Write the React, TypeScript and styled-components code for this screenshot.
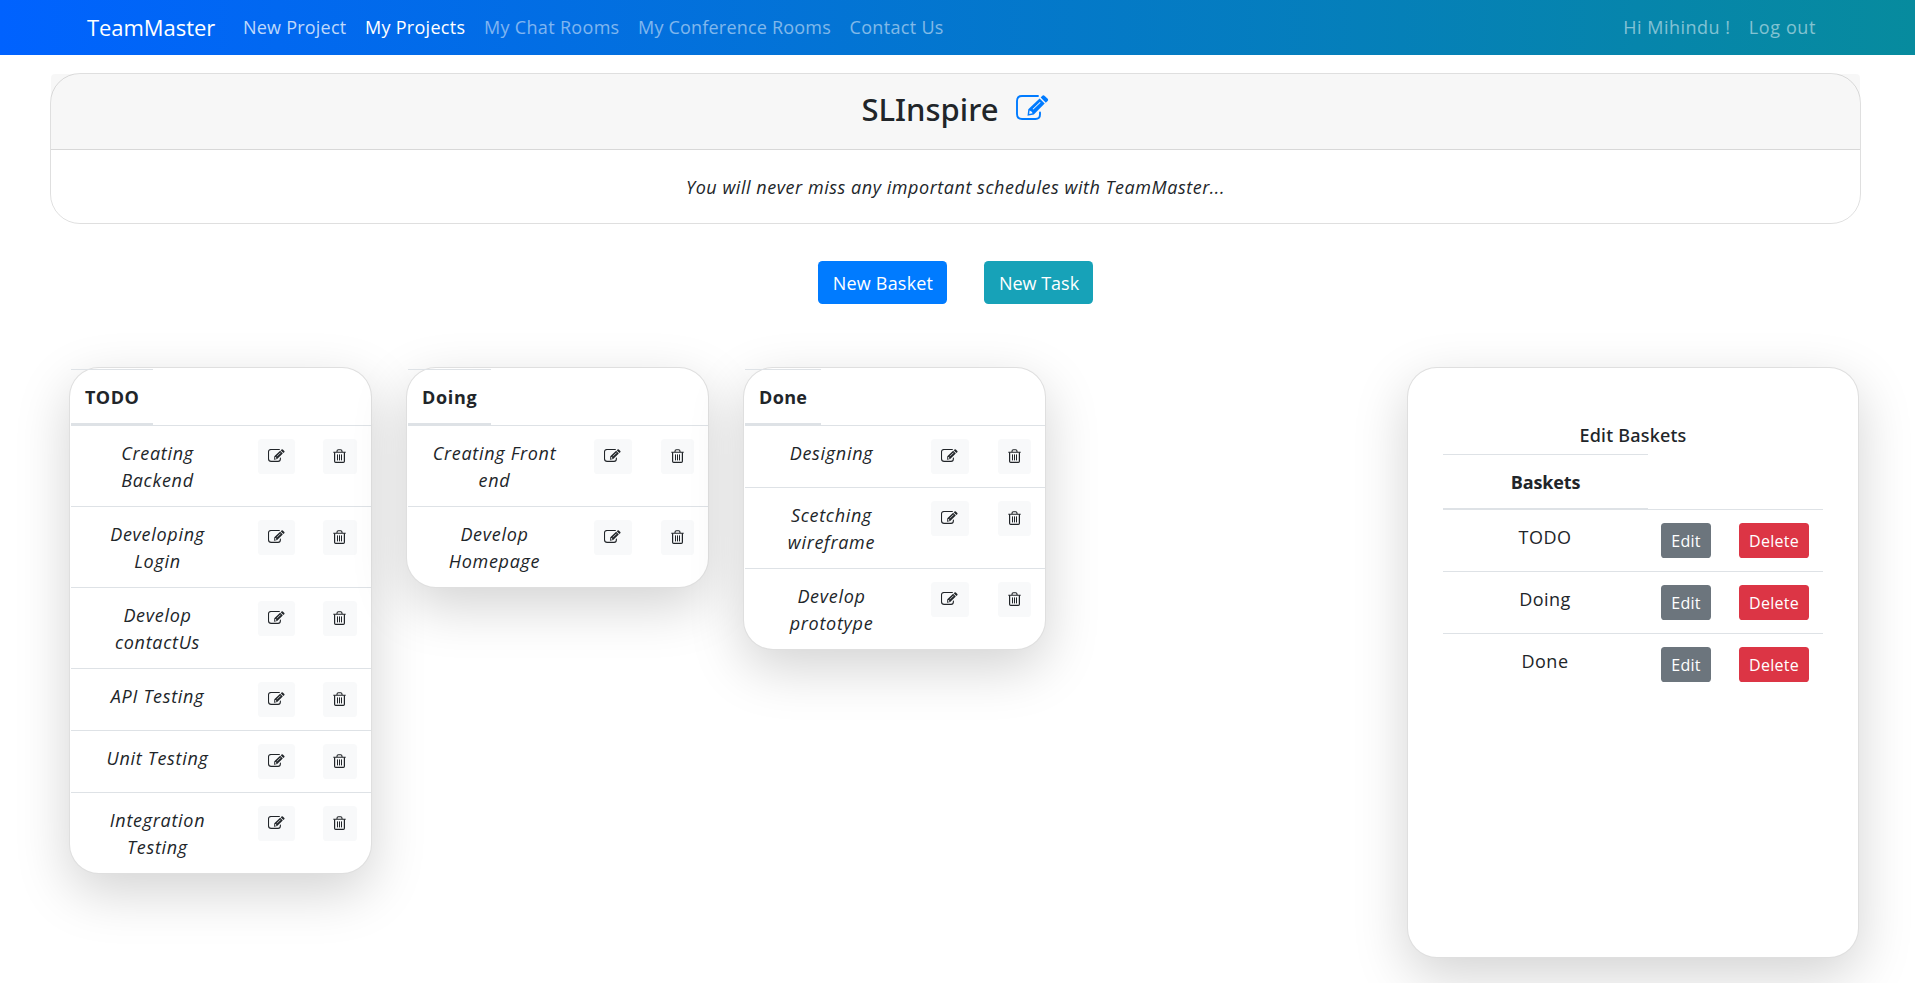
import React from "react";
import styled, { createGlobalStyle, css } from "styled-components";

const GlobalStyle = createGlobalStyle`
  *, *::before, *::after { box-sizing: border-box; }
  html, body { margin: 0; height: 100%; overflow: hidden; background: #fff; }
  body {
    font-family: "Open Sans", "Noto Sans", sans-serif;
    font-size: 18px;
    line-height: 27px;
    color: #212529;
  }
`;

const Page = styled.div`
  height: 983px;
  overflow: hidden;
`;

const Navbar = styled.nav`
  display: flex;
  align-items: center;
  height: 55px;
  padding: 0 99px 0 87px;
  background: linear-gradient(to right, #0062ff, #078b9e);
`;

const Brand = styled.a`
  width: 156px;
  font-size: 22px;
  letter-spacing: -0.05px;
  color: #fff;
  white-space: nowrap;
`;

type Tone = "bright" | "active" | "muted";
const tones: Record<Tone, string> = {
  bright: "rgba(255, 255, 255, 0.75)",
  active: "#fff",
  muted: "rgba(255, 255, 255, 0.5)",
};

const NavLink = styled.a<{ $tone: Tone; $width?: number; $tracking: number }>`
  width: ${(p) => (p.$width ? `${p.$width}px` : "auto")};
  letter-spacing: ${(p) => p.$tracking}px;
  color: ${(p) => tones[p.$tone]};
  white-space: nowrap;
`;

const NavEnd = styled.div`
  display: flex;
  margin-left: auto;
`;

const Banner = styled.section`
  margin: 18px 54px 0 50px;
  height: 151px;
  border: 1px solid rgba(0, 0, 0, 0.125);
  border-radius: 30px;
  text-align: center;
`;

const BannerHead = styled.header`
  display: flex;
  justify-content: center;
  height: 76px;
  padding: 15px 0 0;
  background: rgba(0, 0, 0, 0.03);
  border-bottom: 1px solid rgba(0, 0, 0, 0.125);
  border-radius: 4px 4px 0 0;
`;

const Title = styled.h1`
  margin: 0 18px 0 0;
  font-family: "Noto Sans", sans-serif;
  font-size: 31px;
  font-weight: 500;
  line-height: 40px;
  letter-spacing: 0;
`;

const TitleEdit = styled.a`
  display: flex;
  padding-top: 6px;
  color: #007bff;
`;

const Tagline = styled.p`
  margin: 0;
  padding-top: 24px;
  font-style: italic;
  letter-spacing: 0.54px;
`;

const Actions = styled.div`
  display: flex;
  justify-content: center;
  gap: 37px;
  margin-top: 37px;
  padding-right: 4px;
`;

const ActionButton = styled.button<{ $color: string; $width: number; $tracking: number }>`
  width: ${(p) => p.$width}px;
  height: 43px;
  padding: 2px 0 0 1px;
  border: 0;
  border-radius: 4.5px;
  background: ${(p) => p.$color};
  color: #fff;
  font: inherit;
  letter-spacing: ${(p) => p.$tracking}px;
`;

const Board = styled.main`
  display: flex;
  align-items: flex-start;
  gap: 34px;
  margin-top: 63px;
  padding: 0 56px 0 69px;
`;

const cardFrame = css`
  background: #fff;
  border: 1px solid rgba(0, 0, 0, 0.125);
  border-radius: 30px;
  box-shadow: 0 18px 54px rgba(0, 0, 0, 0.175);
`;

const Basket = styled.article`
  ${cardFrame}
  width: 303px;
  flex: none;
  padding: 1px 0 0 1px;
`;

const BasketHead = styled.h2<{ $width: number; $tracking: number }>`
  width: ${(p) => p.$width}px;
  height: 57px;
  margin: 0 0 -1px;
  padding: 14px 0 0 14px;
  border-top: 1px solid #dee2e6;
  border-bottom: 3px solid #dee2e6;
  font-size: 18px;
  font-weight: 700;
  line-height: 27px;
  letter-spacing: ${(p) => p.$tracking}px;
`;

const TaskRow = styled.div<{ $lines: number }>`
  display: grid;
  grid-template-columns: 173px 1fr auto;
  align-items: start;
  height: ${(p) => (p.$lines > 1 ? 81 : 62)}px;
  padding: 13px 14px 0 0;
  border-top: 1px solid #dee2e6;
`;

const TaskName = styled.div`
  padding-top: 1px;
  font-style: italic;
  text-align: center;
  letter-spacing: 0.7px;
`;

const TaskLine = styled.span`
  display: block;
`;

const EditCell = styled.div<{ $shift: number }>`
  padding-left: ${(p) => p.$shift}px;
`;

const IconButton = styled.button<{ $width: number }>`
  display: flex;
  justify-content: center;
  width: ${(p) => p.$width}px;
  height: 35px;
  padding: 10px 1px 0 0;
  border: 0;
  border-radius: 3.6px;
  background: #f8f9fa;
  color: #212529;
`;

const EditPanel = styled.aside`
  ${cardFrame}
  width: 452px;
  height: 591px;
  margin-left: auto;
  padding: 54px 35px 0 35px;
`;

const PanelTitle = styled.h3`
  margin: 0;
  height: 32px;
  font-family: "Noto Sans", sans-serif;
  font-size: 18px;
  font-weight: 500;
  line-height: 27px;
  letter-spacing: 0.22px;
  text-align: center;
`;

const PanelHead = styled.div`
  width: 205px;
  height: 56px;
  margin-bottom: -1px;
  padding-top: 14px;
  border-top: 1px solid #dee2e6;
  border-bottom: 2px solid #dee2e6;
  font-weight: 700;
  letter-spacing: -0.15px;
  text-align: center;
`;

const PanelRow = styled.div`
  display: grid;
  grid-template-columns: 204px 1fr auto;
  align-items: start;
  height: 62px;
  padding: 13px 14px 0 0;
  border-top: 1px solid #dee2e6;
`;

const PanelName = styled.div`
  padding-top: 1px;
  text-align: center;
  letter-spacing: 0.5px;
`;

const SmallButton = styled.button<{ $color: string; $width: number }>`
  width: ${(p) => p.$width}px;
  height: 35px;
  margin-left: ${(p) => (p.$width < 60 ? 14 : 0)}px;
  padding: 1px 0 0;
  border: 0;
  border-radius: 3.6px;
  background: ${(p) => p.$color};
  color: #fff;
  font: inherit;
  font-size: 16px;
  letter-spacing: 0.25px;
`;

const PencilIcon = ({ size }: { size: number }) => (
  <svg width={size} height={(size * 26) / 33} viewBox="0 0 33 26" fill="none">
    <path
      d="M22 1H6Q1 1 1 6V19Q1 24 6 24H19.5Q24 24 24 19.5V17.5"
      stroke="currentColor"
      strokeWidth={size < 20 ? 2.1 : 1.9}
      strokeLinecap="round"
    />
    <path
      fillRule="evenodd"
      d="M11.5 20.8L12.3 14.2L23.6 3.5L28.7 8.6L17.8 19.4ZM13.6 15.5L13.2 19L16.6 18.3L15.8 16.7ZM16.6 13.9L17.3 14.6L24.6 7.6L23.9 6.9Z"
      fill="currentColor"
    />
    <path d="M24.7 2.5L26.3 .8Q27.5 -.1 28.7 .9L31.7 3.8Q32.6 5 31.6 6.1L29.8 7.7Z" fill="currentColor" />
  </svg>
);

const TrashIcon = () => (
  <svg width="13" height="14" viewBox="0 0 13 14" fill="none" stroke="currentColor">
    <path d="M.3 3.2H12.7M4 3V2.3Q4 .7 5.4 .7H7.6Q9 .7 9 2.3V3" strokeWidth="1.1" />
    <path d="M1.6 3.3V12.3Q1.6 13.4 2.7 13.4H10.3Q11.4 13.4 11.4 12.3V3.3" strokeWidth="1.2" />
    <path d="M4.5 5.4V11.4M6.5 5.4V11.4M8.5 5.4V11.4" strokeWidth="1" />
  </svg>
);

interface BasketData {
  name: string;
  headWidth: number;
  tracking: number;
  editShift: number;
  editWidth: number;
  deleteWidth: number;
  tasks: string[][];
}

const baskets: BasketData[] = [
  {
    name: "TODO",
    headWidth: 82,
    tracking: 0.45,
    editShift: 14,
    editWidth: 37,
    deleteWidth: 34,
    tasks: [
      ["Creating", "Backend"],
      ["Developing", "Login"],
      ["Develop", "contactUs"],
      ["API Testing"],
      ["Unit Testing"],
      ["Integration", "Testing"],
    ],
  },
  {
    name: "Doing",
    headWidth: 83,
    tracking: 0.7,
    editShift: 13,
    editWidth: 38,
    deleteWidth: 33,
    tasks: [
      ["Creating Front", "end"],
      ["Develop", "Homepage"],
    ],
  },
  {
    name: "Done",
    headWidth: 76,
    tracking: 0.35,
    editShift: 13,
    editWidth: 38,
    deleteWidth: 33,
    tasks: [["Designing"], ["Scetching", "wireframe"], ["Develop", "prototype"]],
  },
];

export default function App() {
  return (
    <Page>
      <GlobalStyle />
      <Navbar>
        <Brand>TeamMaster</Brand>
        <NavLink $tone="bright" $width={122} $tracking={0.22}>New Project</NavLink>
        <NavLink $tone="active" $width={119} $tracking={0.28}>My Projects</NavLink>
        <NavLink $tone="muted" $width={154} $tracking={0.32}>My Chat Rooms</NavLink>
        <NavLink $tone="muted" $width={211.5} $tracking={0.2}>My Conference Rooms</NavLink>
        <NavLink $tone="muted" $tracking={0.32}>Contact Us</NavLink>
        <NavEnd>
          <NavLink $tone="muted" $width={125.5} $tracking={0.48}>Hi Mihindu !</NavLink>
          <NavLink $tone="muted" $tracking={0.6}>Log out</NavLink>
        </NavEnd>
      </Navbar>

      <Banner>
        <BannerHead>
          <Title>SLInspire</Title>
          <TitleEdit>
            <PencilIcon size={33} />
          </TitleEdit>
        </BannerHead>
        <Tagline>You will never miss any important schedules with TeamMaster...</Tagline>
      </Banner>

      <Actions>
        <ActionButton $color="#007bff" $width={129} $tracking={0.2}>New Basket</ActionButton>
        <ActionButton $color="#17a2b8" $width={109} $tracking={0}>New Task</ActionButton>
      </Actions>

      <Board>
        {baskets.map((b) => (
          <Basket key={b.name}>
            <BasketHead $width={b.headWidth} $tracking={b.tracking}>{b.name}</BasketHead>
            {b.tasks.map((lines) => (
              <TaskRow key={lines.join(" ")} $lines={lines.length}>
                <TaskName>
                  {lines.map((l) => (
                    <TaskLine key={l}>{l}</TaskLine>
                  ))}
                </TaskName>
                <EditCell $shift={b.editShift}>
                  <IconButton $width={b.editWidth}>
                    <PencilIcon size={17} />
                  </IconButton>
                </EditCell>
                <IconButton $width={b.deleteWidth}>
                  <TrashIcon />
                </IconButton>
              </TaskRow>
            ))}
          </Basket>
        ))}

        <EditPanel>
          <PanelTitle>Edit Baskets</PanelTitle>
          <PanelHead>Baskets</PanelHead>
          {baskets.map((b) => (
            <PanelRow key={b.name}>
              <PanelName>{b.name}</PanelName>
              <SmallButton $color="#6c757d" $width={50}>Edit</SmallButton>
              <SmallButton $color="#dc3545" $width={70}>Delete</SmallButton>
            </PanelRow>
          ))}
        </EditPanel>
      </Board>
    </Page>
  );
}
